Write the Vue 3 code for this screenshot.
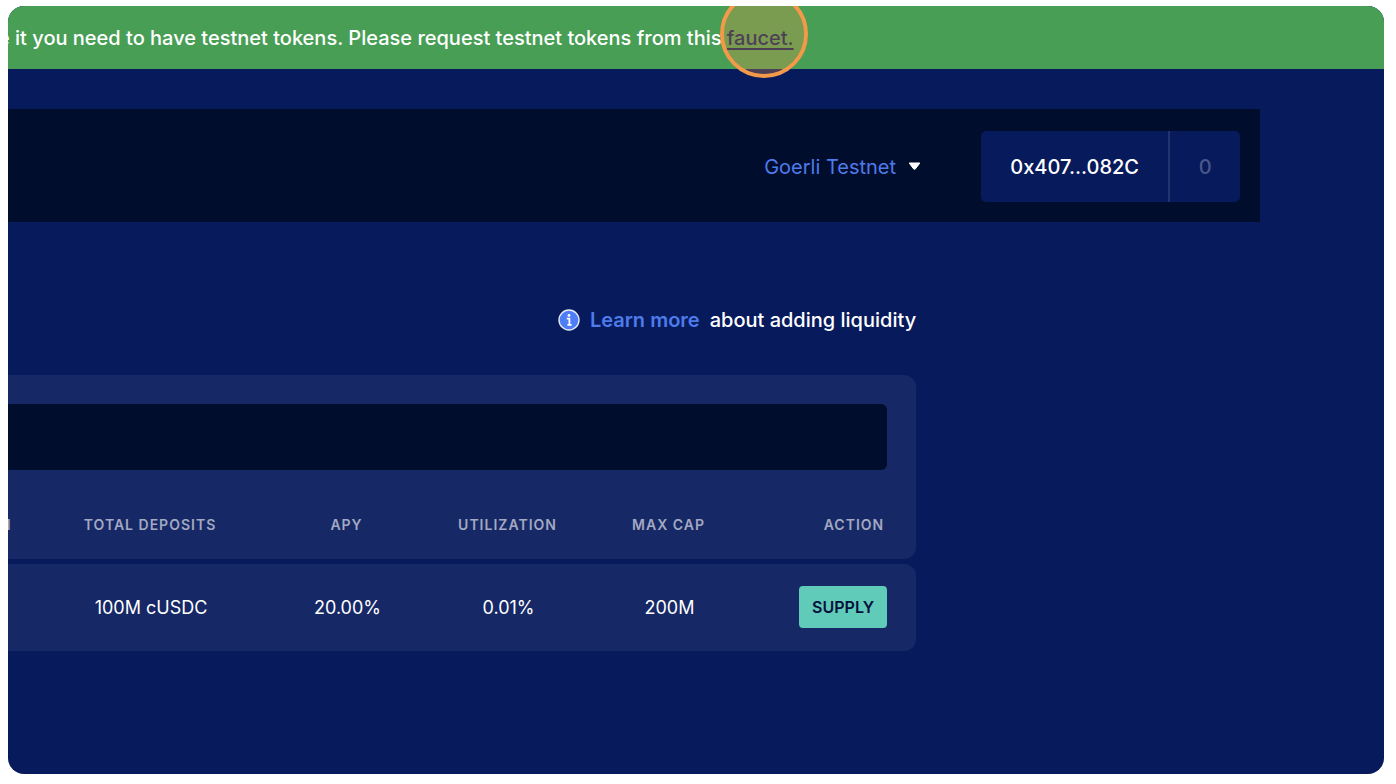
<script setup>
import { ref } from 'vue'

const network = ref('Goerli Testnet')
const query = ref('')
const columns = ['N', 'Total Deposits', 'APY', 'Utilization', 'Max Cap', 'Action']
const markets = [
  { deposits: '100M cUSDC', apy: '20.00%', utilization: '0.01%', cap: '200M' },
]
</script>

<template>
  <div class="page">
    <div class="frame">
      <div class="banner">
        <p class="banner-text">
          e it you need to have testnet tokens. Please request testnet tokens from this
          <span class="target"><a href="#faucet">faucet.</a><span class="pointer"></span></span>
        </p>
      </div>

      <header class="topbar">
        <div class="network">
          <select v-model="network" aria-label="Network">
            <option>Goerli Testnet</option>
          </select>
          <svg class="caret" viewBox="0 0 13 9" aria-hidden="true">
            <path d="M1.2 1h10.6L7.6 6.7Q6.5 8 5.4 6.7Z" fill="#fff" stroke="#fff" stroke-linejoin="round" />
          </svg>
        </div>
        <div class="account">
          <button type="button" class="address">0x407...082C</button>
          <span class="count">0</span>
        </div>
      </header>

      <main>
        <p class="learn">
          <svg class="info" viewBox="0 0 22 22" aria-hidden="true">
            <circle cx="11" cy="11" r="10" fill="#4f7df5" stroke="#e4eafc" stroke-width="1.4" />
            <circle cx="11" cy="6.4" r="1.4" fill="#fff" />
            <path d="M8.8 9.6h2.6v5.2q0 1 1 1h1.2M9.4 15.8h2.6" fill="none" stroke="#fff" stroke-width="1.8" />
          </svg>
          <a href="#learn">Learn more</a>
          <span>about adding liquidity</span>
        </p>

        <div class="search">
          <input v-model="query" type="search" aria-label="Search markets" />
        </div>
        <table>
          <colgroup>
            <col class="c-first" />
            <col class="c-deposits" />
            <col class="c-mid" />
            <col class="c-mid" />
            <col class="c-mid" />
            <col />
          </colgroup>
          <thead>
            <tr>
              <th v-for="c in columns" :key="c" scope="col">{{ c }}</th>
            </tr>
          </thead>
          <tbody>
            <tr v-for="m in markets" :key="m.deposits">
              <td></td>
              <td>{{ m.deposits }}</td>
              <td>{{ m.apy }}</td>
              <td>{{ m.utilization }}</td>
              <td>{{ m.cap }}</td>
              <td><button type="button" class="supply">Supply</button></td>
            </tr>
          </tbody>
        </table>
      </main>
    </div>
  </div>
</template>

<style>
body {
  background: #fff;
}
</style>

<style scoped>
* {
  box-sizing: border-box;
}
.page {
  min-height: 100vh;
  display: flex;
  padding: 6px 12px 10px 8px;
  font-family: Inter, "Noto Sans", sans-serif;
  font-size: 18px;
  color: #fff;
}
.frame {
  flex: 1;
  min-width: 0;
  background: #071a5b;
  border-radius: 16px;
  overflow: hidden;
}
button,
select,
input {
  font: inherit;
  color: inherit;
  border: 0;
  margin: 0;
  padding: 0;
  background: none;
  cursor: pointer;
}
a {
  text-decoration: none;
}
.banner {
  height: 63px;
  display: flex;
  align-items: center;
  background: #479e54;
}
.banner-text {
  margin: 0 0 0 -10px;
  font-size: 20px;
  font-weight: 500;
  line-height: 28px;
  white-space: nowrap;
}
.target {
  position: relative;
}
.target a {
  color: #071a5b;
  text-decoration: underline;
  text-decoration-thickness: 2px;
  text-underline-offset: 3px;
}
.pointer {
  position: absolute;
  left: 50%;
  top: 50%;
  width: 88px;
  height: 88px;
  margin: -48px 0 0 -40px;
  border: 4px solid #f2994a;
  border-radius: 50%;
  background: rgba(242, 153, 74, 0.3);
  background-clip: padding-box;
  pointer-events: none;
}
.topbar {
  width: 91%;
  margin-top: 40px;
  padding: 22px 20px 20px;
  display: flex;
  align-items: center;
  justify-content: flex-end;
  gap: 60px;
  background: #010d2c;
  font-size: 20px;
}
.network {
  display: flex;
  align-items: center;
  gap: 12px;
}
.network select {
  appearance: none;
  color: #4e7bec;
  line-height: 28px;
}
.caret {
  width: 13px;
  height: 9px;
}
.account {
  height: 71px;
  display: flex;
  align-items: stretch;
  background: #071a5b;
  border-radius: 5px;
}
.address {
  width: 189px;
  border-right: 2px solid #23336f;
  font-weight: 500;
}
.count {
  width: 70px;
  display: flex;
  align-items: center;
  justify-content: center;
  font-weight: 500;
  color: #4a578b;
}
main {
  width: 66%;
  padding-top: 84px;
}
.learn {
  margin: 0 0 41px;
  display: flex;
  align-items: center;
  justify-content: flex-end;
  gap: 10px;
  font-size: 20px;
  font-weight: 500;
  line-height: 28px;
}
.info {
  width: 22px;
  height: 22px;
}
.learn a {
  color: #4e7bec;
  font-weight: 600;
}
.search {
  padding: 29px 29px 0 0;
  background: #172866;
  border-radius: 0 12px 0 0;
}
.search input {
  display: block;
  width: 100%;
  height: 66px;
  padding: 0 24px;
  background: #010d2c;
  border-radius: 0 6px 6px 0;
  cursor: text;
}
table {
  width: 100%;
  table-layout: fixed;
  border-spacing: 0;
}
.c-first {
  width: 27px;
}
.c-deposits {
  width: 232px;
}
.c-mid {
  width: 161px;
}
th,
td {
  padding: 0;
  text-align: center;
  background: #172866;
}
th {
  height: 89px;
  padding: 20px 2px 0 0;
  font-size: 14px;
  line-height: 20px;
  font-weight: 600;
  letter-spacing: 1px;
  text-transform: uppercase;
  color: #a2a9c2;
}
th:first-child {
  text-align: left;
  text-indent: -8px;
}
th:last-child,
td:last-child {
  padding-right: 29px;
  text-align: right;
}
th:last-child {
  padding-right: 32px;
  border-radius: 0 0 12px 0;
}
tbody::before {
  content: "";
  display: block;
  height: 5px;
}
td {
  height: 87px;
}
td:last-child {
  padding-bottom: 2px;
  border-radius: 0 12px 12px 0;
}
.supply {
  width: 88px;
  height: 42px;
  display: inline-block;
  vertical-align: middle;
  background: #61cbb9;
  color: #04103a;
  border-radius: 4px;
  font-size: 16px;
  font-weight: 600;
  text-transform: uppercase;
}
</style>
